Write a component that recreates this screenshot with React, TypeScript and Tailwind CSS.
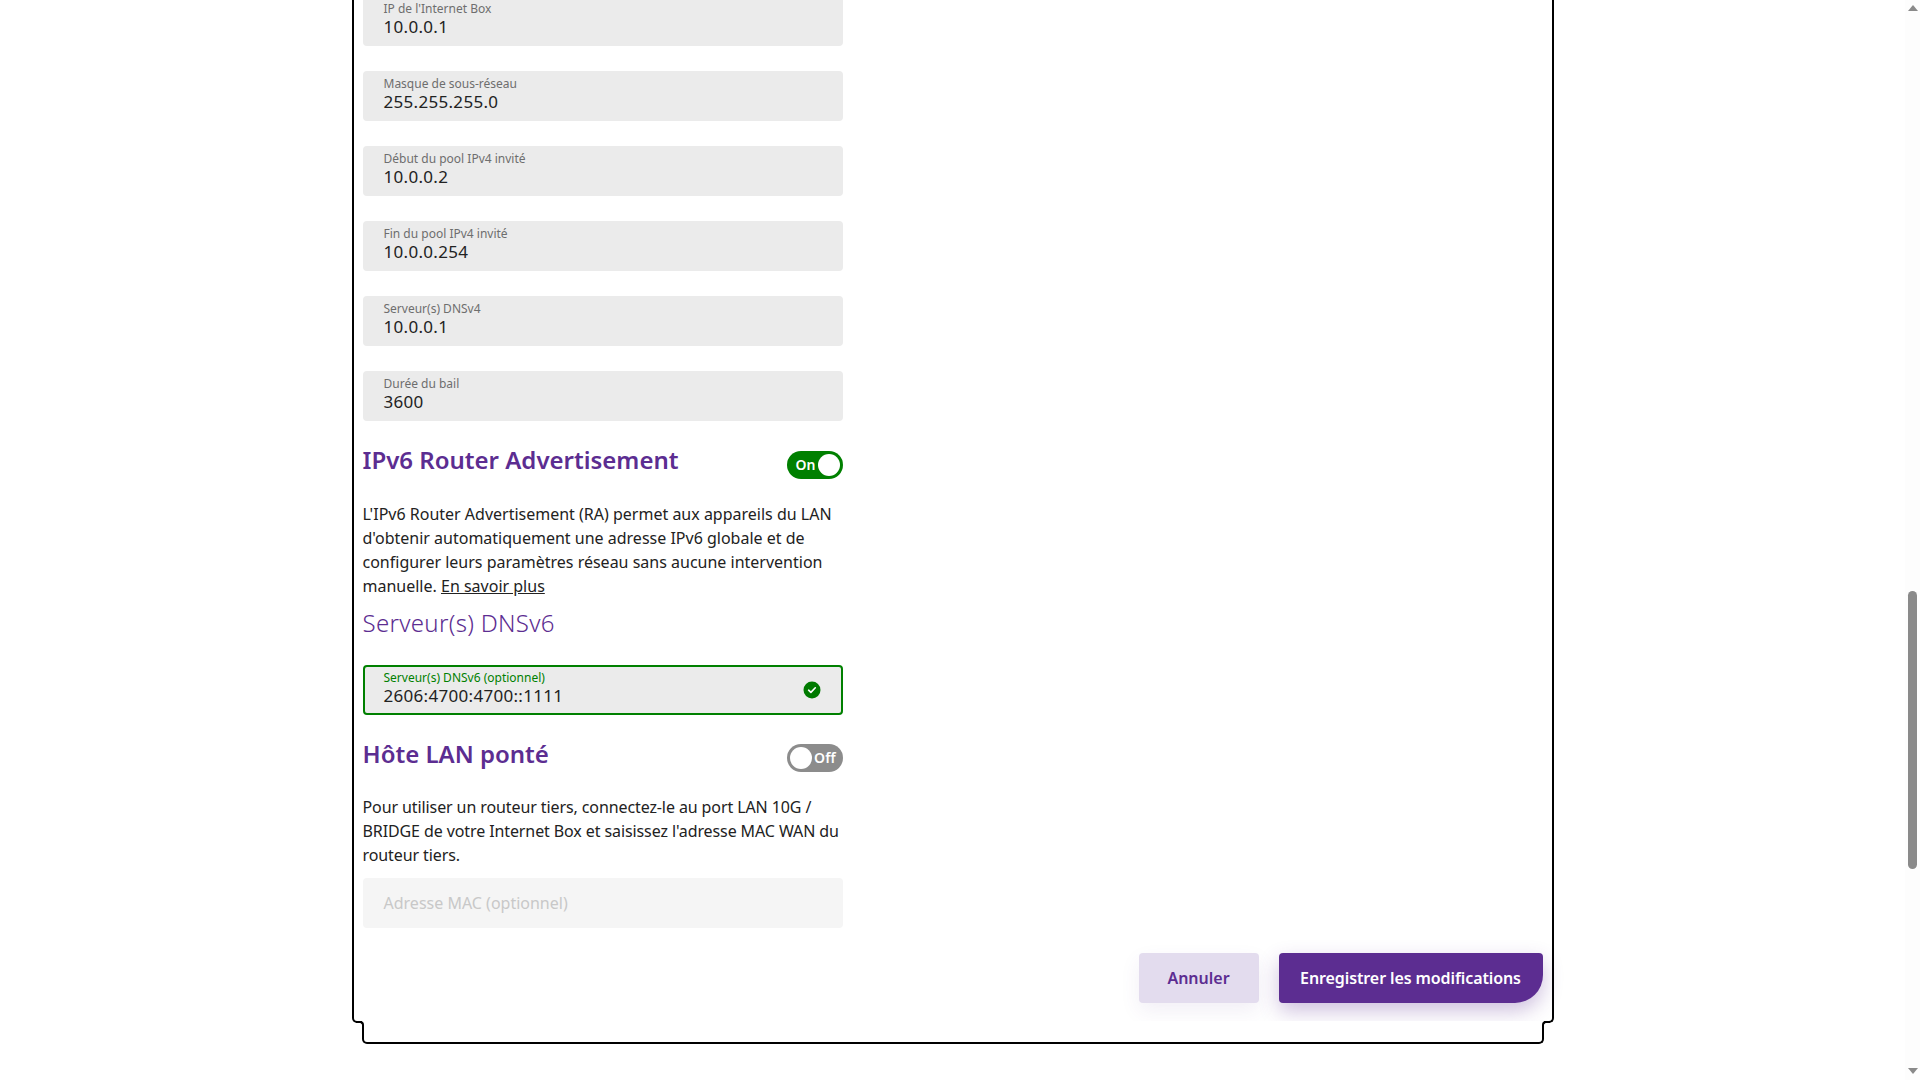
import React from 'react';

const FONT = "font-['Noto_Sans',sans-serif]";

const Field: React.FC<{ label: string; value: string }> = ({ label, value }) => (
  <div className="h-[50px] w-[480px] rounded-[4px] bg-[#ebebeb] pl-[21px] pt-[4px]">
    <div className="text-[12px] leading-[17px] text-[#6e6e6e]">{label}</div>
    <div className="text-[17px] leading-[20px] tracking-[0.3px] text-[#222222]">{value}</div>
  </div>
);

const Toggle: React.FC<{ on: boolean }> = ({ on }) =>
  on ? (
    <div className="mt-[7px] flex h-[28px] w-[56px] items-center justify-between rounded-full bg-[#008000] pl-[9px] pr-[3px]">
      <span className="text-[14px] font-semibold leading-none text-white">On</span>
      <span className="h-[22px] w-[22px] rounded-full bg-white" />
    </div>
  ) : (
    <div className="mt-[6px] flex h-[28px] w-[56px] items-center justify-between rounded-full bg-[#8c8c8c] pl-[3px] pr-[7px]">
      <span className="h-[22px] w-[22px] rounded-full bg-white" />
      <span className="text-[14px] font-semibold leading-none text-white">Off</span>
    </div>
  );

const Section: React.FC<{ title: string; on: boolean; className: string }> = ({ title, on, className }) => (
  <div className={`flex w-[480px] items-start justify-between ${className}`}>
    <h2 className="text-[24px] font-semibold leading-[32px] text-[#5c2d91]">{title}</h2>
    <Toggle on={on} />
  </div>
);

export default function App() {
  return (
    <div className={`flex h-[1080px] overflow-hidden bg-white ${FONT}`}>
      <main className="flex-1">
        <div className="mx-auto w-[1202px]">
          {/* upper part of the frame, scrolled past the top of the page */}
          <div className="-mt-[4px] h-[1027px] rounded-b-[5px] border-x-[2px] border-b-[2px] border-black pl-[9px] pr-[9px]">
            <div className="flex flex-col gap-[25px]">
              <Field label="IP de l'Internet Box" value="10.0.0.1" />
              <Field label="Masque de sous-réseau" value="255.255.255.0" />
              <Field label="Début du pool IPv4 invité" value="10.0.0.2" />
              <Field label="Fin du pool IPv4 invité" value="10.0.0.254" />
              <Field label="Serveur(s) DNSv4" value="10.0.0.1" />
              <Field label="Durée du bail" value="3600" />
            </div>

            <Section title="IPv6 Router Advertisement" on className="mb-[23px] mt-[23px]" />
            <p className="w-[480px] text-[16px] leading-[24px] text-[#222222]">
              L'IPv6 Router Advertisement (RA) permet aux appareils du LAN d'obtenir automatiquement une adresse IPv6 globale et de configurer leurs paramètres réseau sans aucune intervention manuelle.{' '}
              <a className="underline">En savoir plus</a>
            </p>
            <h3 className="mt-[9px] text-[24px] font-light leading-[32px] tracking-[0.3px] text-[#5c2d91]">Serveur(s) DNSv6</h3>

            <div className="relative mt-[26px] h-[50px] w-[480px] rounded-[4px] border-[2px] border-[#008000] bg-[#ebebeb] pl-[19px] pt-[2px]">
              <div className="text-[12px] leading-[17px] text-[#008000]">Serveur(s) DNSv6 (optionnel)</div>
              <div className="text-[17px] leading-[19px] tracking-[0.3px] text-[#222222]">2606:4700:4700::1111</div>
              <svg className="absolute right-[20px] top-[14px]" width="18" height="18" viewBox="0 0 18 18">
                <circle cx="9" cy="9" r="8.5" fill="#007a00" />
                <path d="M5.6 9.2l2.3 2.2 4.4-4.6" fill="none" stroke="#ffffff" strokeWidth="1.6" strokeLinecap="round" strokeLinejoin="round" />
              </svg>
            </div>

            <Section title="Hôte LAN ponté" on={false} className="mb-[23px] mt-[23px]" />
            <p className="w-[480px] text-[16px] leading-[24px] tracking-[-0.1px] text-[#222222]">
              Pour utiliser un routeur tiers, connectez-le au port LAN 10G / BRIDGE de votre Internet Box et saisissez l'adresse MAC WAN du routeur tiers.
            </p>
            <div className="mt-[11px] flex h-[50px] w-[480px] items-center rounded-[4px] bg-[#f5f5f5] pl-[21px] text-[16px] text-[#c8c8c8]">
              Adresse MAC (optionnel)
            </div>

            <div className="mt-[25px] flex justify-end gap-[20px]">
              <button className="h-[50px] w-[120px] rounded-[4px] bg-[#e3dcee] text-[16px] font-semibold text-[#5c2d91] shadow-[0_8px_20px_rgba(92,45,145,0.08)]">
                Annuler
              </button>
              <button className="h-[50px] w-[264px] rounded-[4px] rounded-br-[28px] bg-[#5c2d91] text-[16px] font-semibold tracking-[-0.1px] text-white shadow-[0_8px_20px_rgba(92,45,145,0.3)]">
                Enregistrer les modifications
              </button>
            </div>
          </div>
          {/* lower tab of the frame, hides the middle of the upper bottom border */}
          <div className="relative mx-[10px] -mt-[2px] h-[23px] bg-white">
            <span className="absolute -left-[6px] top-0 h-[6px] w-[8px] rounded-tr-[4px] border-r-[2px] border-t-[2px] border-black" />
            <span className="absolute -right-[6px] top-0 h-[6px] w-[8px] rounded-tl-[4px] border-l-[2px] border-t-[2px] border-black" />
            <div className="h-[4px]" />
            <div className="h-[19px] rounded-b-[5px] border-x-[2px] border-b-[2px] border-black" />
          </div>
        </div>
      </main>

      <aside className="flex w-[15px] flex-col items-center bg-[#fdfdfd] pt-[5px]">
        <span className="h-0 w-0 border-x-[5px] border-b-[6px] border-x-transparent border-b-[#8a8a8a]" />
        <span className="mt-[580px] h-[278px] w-[9px] rounded-full bg-[#8a8a8a]" />
        <span className="mt-[199px] h-0 w-0 border-x-[5px] border-t-[6px] border-x-transparent border-t-[#8a8a8a]" />
      </aside>
    </div>
  );
}
